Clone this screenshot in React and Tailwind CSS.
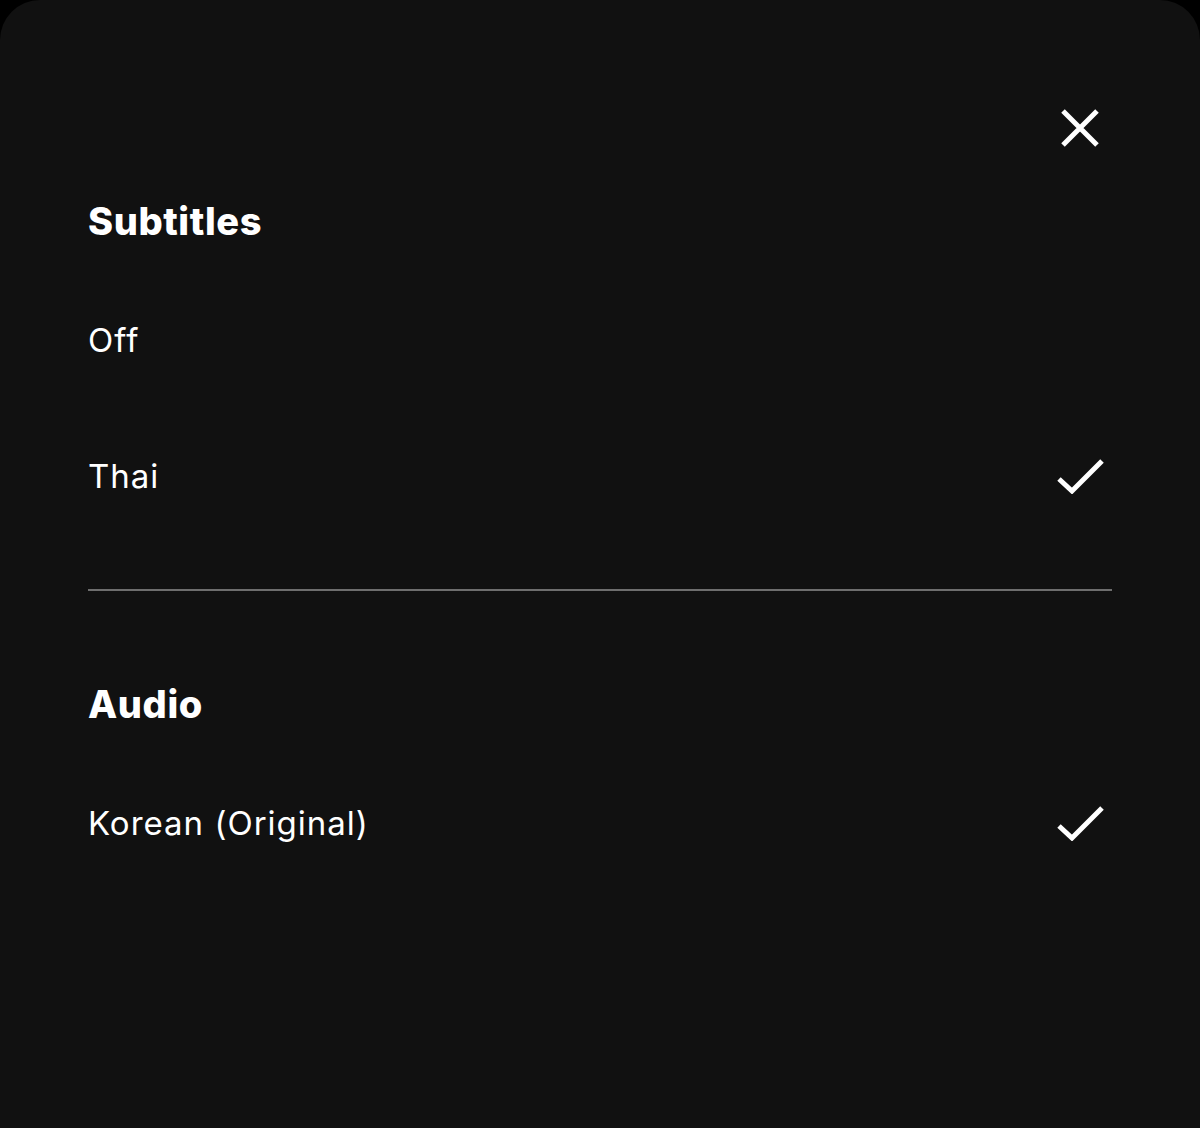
function CloseIcon() {
  return (
    <svg width="48" height="48" viewBox="0 0 48 48" fill="none">
      <path d="M7 7L41 41M41 7L7 41" stroke="white" strokeWidth="5" />
    </svg>
  );
}

function CheckIcon() {
  return (
    <svg width="48" height="36" viewBox="0 0 48 36" fill="none">
      <path d="M3 21L16 33L46 3" stroke="white" strokeWidth="5" />
    </svg>
  );
}

function Option({ label, selected }) {
  return (
    <div className="flex h-[136px] items-center justify-between pr-[8px]">
      <span className="text-[33px] leading-[40px] tracking-[1px] text-white">{label}</span>
      {selected && <CheckIcon />}
    </div>
  );
}

function Section({ title, children }) {
  return (
    <section>
      <h2 className="text-[38px] font-extrabold leading-[44px] tracking-[0.6px] text-white">{title}</h2>
      <div className="mt-[29px]">{children}</div>
    </section>
  );
}

export default function App() {
  return (
    <div className="h-[1128px] w-full bg-black" style={{ fontFamily: "Inter, 'Noto Sans', sans-serif" }}>
      <div className="h-full rounded-t-[40px] bg-[#111111] px-[88px] pt-[104px]">
        <div className="flex justify-end pr-[8px]">
          <button className="flex h-[48px] w-[48px] items-center justify-center">
            <CloseIcon />
          </button>
        </div>

        <div className="mt-[47px]">
          <Section title="Subtitles">
            <Option label="Off" />
            <Option label="Thai" selected />
          </Section>
        </div>

        <div className="mt-[45px] h-[2px] bg-[#6e6e6e]" />

        <div className="mt-[91px]">
          <Section title="Audio">
            <Option label="Korean (Original)" selected />
          </Section>
        </div>
      </div>
    </div>
  );
}
